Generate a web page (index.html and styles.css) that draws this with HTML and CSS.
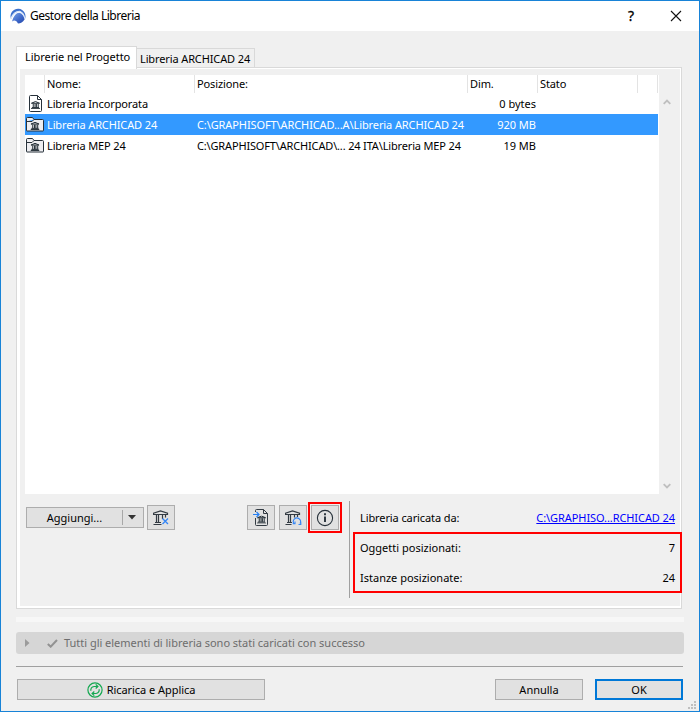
FILE: index.html
```html
<!DOCTYPE html>
<html lang="it">
<head>
<meta charset="utf-8">
<title>Gestore della Libreria</title>
<link rel="stylesheet" href="styles.css">
</head>
<body>
<svg width="0" height="0" class="defs">
  <symbol id="temple" viewBox="0 0 10 9"><path d="M.5 2.500h9L5 .600zM2.500 3v4M4.500 3v4M6 3v4M8 3v4M1 7.300h8M0 8.500h10" fill="none" stroke="#1f2a33" stroke-width="1.100"/></symbol>
  <symbol id="folder" viewBox="0 0 18 15"><path d="M.5 13.500V1.500q0-1 1-1h5l1.500 2h8.500q1 0 1 1v10q0 .500-.500 .500H1q-.500 0-.500-.500zM.5 4.500h5.500l2-2" fill="#ededf0" stroke="#27313a"/><use href="#temple" x="4.500" y="4.800" width="9" height="8.100"/></symbol>
  <symbol id="doc" viewBox="0 0 13 17"><path d="M.5 15.500V1.500q0-1 1-1h7l4 4v11q0 1-1 1h-10q-1 0-1-1zM8.500.5v4h4" fill="#fff" stroke="#27313a"/><use href="#temple" x="2" y="6" width="9" height="8.100"/></symbol>
</svg>
<div class="window">
  <header class="titlebar">
    <svg class="logo" width="16" height="16" viewBox="0 0 16 16"><defs><linearGradient id="lg" x1="0" y1="0" x2="1" y2="1"><stop offset="0" stop-color="#7ba5e8"/><stop offset=".6" stop-color="#3c66c8"/><stop offset="1" stop-color="#2448a8"/></linearGradient></defs><path d="M1 11A7.500 7.500 0 1 1 14.500 12Q15 6 10.500 3.500 4.500 2.500 1 11z" fill="#3c70cc"/><path d="M.8 10.800Q3.500 3.300 9.500 3.300 14.300 5 14.700 11" fill="none" stroke="#dce8fa" stroke-width="1.200"/><path d="M2 13.500Q4.500 4.800 9.300 4.800 13.500 6 14.500 11.500 12 15.600 8 15.600 7 12.800 4.800 12.500 3.200 12.500 2 13.500z" fill="url(#lg)"/></svg>
    <h1>Gestore della Libreria</h1>
    <span class="help">?</span>
    <svg class="close" width="12" height="12" viewBox="0 0 12 12"><path d="M1 1l10 10M11 1L1 11" stroke="#111" stroke-width="1.100"/></svg>
  </header>
  <nav class="tabs"><div class="tab active">Librerie nel Progetto</div><div class="tab">Libreria ARCHICAD 24</div></nav>
  <section class="panel">
    <div class="listwrap">
      <div class="list">
        <div class="row head"><span></span><span>Nome:</span><span>Posizione:</span><span>Dim.</span><span>Stato</span><span></span></div>
        <div class="row"><span class="ic doc"><svg width="13" height="17"><use href="#doc"/></svg></span><span>Libreria Incorporata</span><span></span><span class="size">0 bytes</span></div>
        <div class="row sel"><span class="ic"><svg width="18" height="15"><use href="#folder"/></svg></span><span>Libreria ARCHICAD 24</span><span class="path1">C:\GRAPHISOFT\ARCHICAD...A\Libreria ARCHICAD 24</span><span class="size">920 MB</span></div>
        <div class="row"><span class="ic"><svg width="18" height="15"><use href="#folder"/></svg></span><span>Libreria MEP 24</span><span class="path2">C:\GRAPHISOFT\ARCHICAD\... 24 ITA\Libreria MEP 24</span><span class="size">19 MB</span></div>
      </div>
      <div class="scroll">
        <svg width="8" height="6" viewBox="0 0 8 6"><path d="M.7 4.800L4 1.500l3.300 3.300" fill="none" stroke="#bfbfbf" stroke-width="1.800"/></svg>
        <svg width="8" height="6" viewBox="0 0 8 6"><path d="M.7 1.200L4 4.500l3.300-3.300" fill="none" stroke="#bfbfbf" stroke-width="1.800"/></svg>
      </div>
    </div>
    <div class="lower">
      <div class="tools">
        <div class="btn add"><span>Aggiungi...</span><i></i><svg width="8" height="5"><path d="M0 0h8L4 4.500z" fill="#333"/></svg></div>
        <div class="btn tool"><svg width="16" height="16" viewBox="0 0 16 16"><path d="M.5 4.500V3.300L7.500 1l7 2.300v1.200zM3.500 5v7M5.500 5v7M9.500 5v4M12.500 5v2.500M2 12.500h6M.5 14.500h8" fill="none" stroke="#333b43" stroke-width="1.200"/><path d="M9.500 8.500l5.500 5.500m0-5.500L9.500 14" stroke="#3385f5" stroke-width="1.300"/></svg></div>
        <div class="btn tool import"><svg width="17" height="17" viewBox="0 0 17 17"><path d="M3.500 3V1.500q0-1 1-1h7l4 4v11q0 1-1 1h-10q-1 0-1-1V9M11.500.5v4h4" fill="none" stroke="#333b43"/><use href="#temple" x="5" y="6.500" width="9" height="8.100"/><path d="M1 5.500h6M4.500 3l2.500 2.500L4.500 8" fill="none" stroke="#2580f5" stroke-width="1.200"/></svg></div>
        <div class="btn tool"><svg width="17" height="16" viewBox="0 0 17 16"><path d="M.5 4.500V3.300L7.500 1l7 2.300v1.200zM3.500 5v7M5.500 5v7M9.500 5v2.500M12.500 5v2M2 12.500h5M.5 14.500h6" fill="none" stroke="#333b43" stroke-width="1.200"/><path d="M9.200 14A3.600 3.600 0 1 1 15 13.500M7.700 13.800h2.300v-2.300M13.500 14.500h2.300v-2.300" fill="none" stroke="#3385f5" stroke-width="1.100"/></svg></div>
        <div class="btn tool info"><svg width="18" height="18" viewBox="0 0 18 18"><circle cx="9" cy="9" r="7.600" fill="none" stroke="#27313a" stroke-width="1.100"/><path d="M9 7.500V13M9 4.300v2" stroke="#27313a" stroke-width="1.900"/></svg><b class="mark"></b></div>
      </div>
      <div class="details">
        <div><span class="from">Libreria caricata da:</span><a>C:\GRAPHISO...RCHICAD 24</a></div>
        <div><span>Oggetti posizionati:</span><span>7</span></div>
        <div><span>Istanze posizionate:</span><span>24</span></div>
        <b class="mark"></b>
      </div>
    </div>
  </section>
  <div class="band"></div>
  <div class="status"><svg width="5" height="8"><path d="M0 0l4.500 4L0 8z" fill="#9b9b9b"/></svg><svg class="check" width="11" height="9" viewBox="0 0 11 9"><path d="M.8 5l2.900 2.700L10 1" fill="none" stroke="#929292" stroke-width="2"/></svg><span>Tutti gli elementi di libreria sono stati caricati con successo</span></div>
  <footer class="footer">
    <div class="btn reload"><svg width="16" height="16" viewBox="0 0 16 16"><g fill="none" stroke="#13a850" stroke-width="1.200"><circle cx="8" cy="8" r="7.100"/><path d="M3.800 8.700Q3.600 5 7 4.500h3.500M8.700 2.400l2.200 2.100-2.200 2M12.200 7.300Q12.400 11 9 11.500H5.500M7.300 9.500l-2.200 2 2.200 2.100"/></g></svg><span>Ricarica e Applica</span></div>
    <div class="btn cancel">Annulla</div>
    <div class="btn ok">OK</div>
  </footer>
  <svg class="grip" width="8" height="8"><path d="M6 0h2v2H6zM3 3h2v2H3zM6 3h2v2H6zM0 6h2v2H0zM3 6h2v2H3zM6 6h2v2H6z" fill="#bfbfbf"/></svg>
</div>
</body>
</html>
```
FILE: styles.css
```css
* { box-sizing: border-box; }
body { margin: 0; font: 11px/20px "Noto Sans", "Open Sans", sans-serif; color: #000; white-space: nowrap; }
svg { display: block; flex: none; }
.defs { position: absolute; }
.window { position: relative; width: 700px; height: 712px; border: 1px solid #1883d7; background: #f0f0f0; overflow: hidden; }
.titlebar { height: 30px; background: #fff; display: flex; align-items: center; padding: 0 17px 0 9px; }
h1 { font-size: 12px; font-weight: 400; letter-spacing: -.48px; margin: 0 0 0 4px; flex: 1; }
.help { font-size: 14px; width: 10px; text-align: center; margin-right: 34px; -webkit-text-stroke: .3px #000; }
.tabs { display: flex; align-items: flex-end; height: 37px; padding-left: 15px; letter-spacing: -.08px; }
.tab { height: 20px; width: 118px; border: 1px solid #d9d9d9; border-left: 0; padding-left: 3px; line-height: 20px; letter-spacing: -.12px; }
.tab.active { letter-spacing: -.05px; position: relative; width: 121px; height: 23px; margin-bottom: -1px; border-left: 1px solid #d9d9d9; border-bottom: 0; background: #fff; padding-left: 8px; line-height: 20px; }
.panel { margin: -1px 0 0 15px; width: 666px; height: 542px; border: 1px solid #d9d9d9; background: #f0f0f0; box-shadow: inset 3px 0 #fff, inset 0 1px #fff, inset -1px 0 #fff, inset 0 -2px #fff; padding: 7px 0 0 8px; }
.listwrap { display: flex; height: 419px; }
.list { width: 634px; background: #fff; padding-right: 1px; }
.row { display: grid; grid-template-columns: 20px 150px 273px 70px 100px 20px; height: 21px; line-height: 21px; letter-spacing: -.12px; }
.row span { padding-left: 2px; }
.row.head { height: 18px; line-height: 18px; }
.head span { border-right: 1px solid #e3e3e3; }
.row .path1 { letter-spacing: -.1px; }
.row .path2 { letter-spacing: -.16px; }
.row .ic { display: flex; align-items: center; justify-content: center; padding: 0; }
.row .doc { padding-left: 1px; }
.row .size { text-align: right; padding-right: 2px; letter-spacing: 0; }
.sel { background: #39f; color: #fff; }
.scroll { width: 16px; display: flex; flex-direction: column; justify-content: space-between; align-items: center; padding: 24px 0 5px; }
.lower { display: flex; padding-top: 7px; }
.tools { display: flex; align-items: center; width: 324px; height: 33px; padding-left: 1px; }
.btn { display: flex; align-items: center; justify-content: center; height: 21px; border: 1px solid #adadad; background: #e1e1e1; }
.add { width: 118px; margin-right: 3px; justify-content: flex-start; }
.add span { width: 95px; text-align: center; }
.add i { width: 1px; height: 15px; background: #a8a8a8; margin-right: 5px; }
.tool { width: 28px; height: 25px; }
.tool + .tool { margin-left: 4px; }
.tools .import { margin-left: 72px; padding-right: 2px; }
.info, .details { position: relative; }
.mark { position: absolute; border: 2px solid #f00; pointer-events: none; }
.info .mark { left: -4px; top: -4px; width: 34px; height: 31px; }
.details { width: 328px; height: 97px; border-left: 1px solid #a0a0a0; padding: 2px 0 0 10px; }
.details > div { display: flex; justify-content: space-between; width: 315px; height: 30px; line-height: 30px; }
.details .from { letter-spacing: -.1px; }
.details a { color: #00f; text-decoration: underline; letter-spacing: -.08px; }
.details .mark { left: 3px; top: 31px; width: 329px; height: 61px; }
.band { margin: 8px 0 0 15px; width: 668px; height: 5px; background: #f7f7f7; }
.status { margin: 10px 0 0 15px; width: 668px; height: 22px; border-radius: 3px; background: #d6d6d6; color: #6d6d6d; display: flex; align-items: center; padding-left: 9px; letter-spacing: -.02px; }
.check { margin: 0 6px 0 17px; }
.footer { margin: 12px 0 0 15px; width: 667px; border-top: 1px solid #a0a0a0; padding: 12px 0 0 1px; display: flex; }
.reload { width: 248px; gap: 4px; letter-spacing: -.05px; }
.cancel { width: 88px; margin-left: 230px; }
.ok { width: 88px; margin-left: 12px; border: 2px solid #0078d7; }
.grip { position: absolute; right: 3px; bottom: 2px; }
```
